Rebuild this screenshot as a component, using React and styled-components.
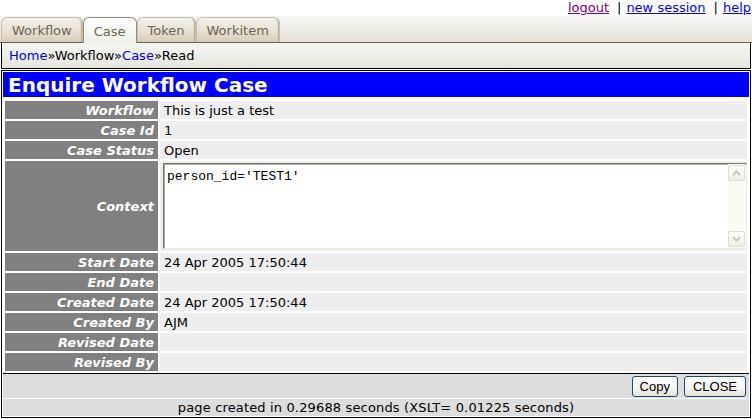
import React from 'react';
import styled, { createGlobalStyle } from 'styled-components';

const GlobalStyle = createGlobalStyle`
  body {
    margin: 0;
    background: #fff;
    font-family: 'DejaVu Sans', Verdana, sans-serif;
    font-size: 13px;
    color: #000;
  }
`;

const Page = styled.div`
  padding: 0 1px;
`;

const TopLinks = styled.div`
  height: 16px;
  line-height: 15px;
  text-align: right;
  padding-right: 0;
`;

const TopLink = styled.a`
  color: ${(p) => (p.visited ? '#800080' : '#0000ff')};
  text-decoration: underline;
  cursor: pointer;
`;

const Sep = styled.span`
  margin: 0 5px 0 8px;
`;

const TabBar = styled.div`
  display: flex;
  align-items: flex-end;
  height: 26px;
  padding-left: 1px;
  background: linear-gradient(#f6f6f2, #e4e2d9);
  border-bottom: 1px solid #6e6050;
  margin: 0 -1px;
`;

const Tab = styled.div`
  height: ${(p) => (p.active ? '26px' : '25px')};
  margin-bottom: ${(p) => (p.active ? '-1px' : '0')};
  padding: 0 10px;
  box-sizing: border-box;
  display: flex;
  align-items: center;
  justify-content: center;
  border: 1px solid ${(p) => (p.active ? '#948c77' : '#c6bfab')};
  border-bottom: none;
  border-radius: 6px 6px 0 0;
  background: ${(p) =>
    p.active
      ? 'linear-gradient(#ffffff, #f4f4ef 70%, #eeede6)'
      : 'linear-gradient(#f3f1e9, #e4dfd0 60%, #d5ceba)'};
  box-shadow: ${(p) => (p.active ? 'none' : 'inset -2px 0 1px -1px #b7af97')};
  color: #6b6553;
  font-size: 13px;
  padding-top: ${(p) => (p.active ? '2px' : '0')};
`;

const Crumbs = styled.div`
  height: 25px;
  display: flex;
  align-items: center;
  padding-left: 7px;
  border: 1px solid #000;
  border-top: none;
  background: linear-gradient(#f5f5f0, #eef0ea 45%, #e6e4db);
`;

const CrumbLink = styled.a`
  color: #0000ff;
  text-decoration: none;
`;

const Main = styled.div`
  margin-top: 1px;
  border: 1px solid #000;
  padding: 1px;
  background: #fff;
`;

const Title = styled.div`
  height: 25px;
  background: #0000ff;
  color: #fff;
  font-weight: bold;
  font-size: 20px;
  line-height: 26px;
  padding-left: 5px;
  white-space: nowrap;
`;

const Fields = styled.div`
  display: grid;
  grid-template-columns: 153px 1fr;
  gap: 2px;
  padding: 4px 2px 2px;
`;

const Label = styled.div`
  height: ${(p) => (p.tall ? '90px' : '18px')};
  background: #808080;
  color: #fff;
  font-weight: bold;
  font-style: italic;
  text-align: right;
  padding-right: 4px;
  display: flex;
  align-items: center;
  justify-content: flex-end;
`;

const Value = styled.div`
  height: 18px;
  background: #eeeeee;
  padding-left: 4px;
  display: flex;
  align-items: center;
  white-space: nowrap;
`;

const ContextValue = styled.div`
  height: 90px;
  background: #eeeeee;
  padding: 2px 0 2px 3px;
  box-sizing: border-box;
`;

const Field = styled.div`
  display: flex;
  height: 86px;
  box-sizing: border-box;
  border: 1px solid;
  border-color: #7a7467 #ece9d8 #ece9d8 #7a7467;
  box-shadow: inset 1px 1px 0 #aca695;
  background: #fff;
`;

const Area = styled.textarea`
  flex: 1;
  border: none;
  outline: none;
  resize: none;
  overflow: hidden;
  margin: 0;
  padding: 5px 0 0 3px;
  background: transparent;
  font-family: 'Liberation Mono', 'Courier New', monospace;
  font-size: 13px;
  line-height: 15px;
  color: #000;
`;

const Scroll = styled.div`
  width: 17px;
  display: flex;
  flex-direction: column;
  justify-content: space-between;
  background: #fbfbf4;
  padding: 1px 0;
  margin-right: 1px;
`;

const ScrollBtn = styled.div`
  height: 16px;
  box-sizing: border-box;
  border: 1px solid #dedcd0;
  border-radius: 2px;
  background: linear-gradient(#fdfdf9, #efeee6);
  display: flex;
  align-items: center;
  justify-content: center;
`;

const Chevron = ({ down }) => (
  <svg width="9" height="6" viewBox="0 0 9 6">
    <path
      d={down ? 'M1 1 L4.5 4.5 L8 1' : 'M1 5 L4.5 1.5 L8 5'}
      fill="none"
      stroke="#c9c8bd"
      strokeWidth="2"
    />
  </svg>
);

const ButtonBar = styled.div`
  border-top: 1px solid #000;
  background: #dddddd;
  height: 24px;
  display: flex;
  align-items: center;
  justify-content: flex-end;
  gap: 6px;
  padding-right: 3px;
`;

const Button = styled.button`
  height: 21px;
  padding: 0 ${(p) => (p.wide ? '8px' : '7px')};
  margin-top: 1px;
  border: 1px solid #1c4a7e;
  border-radius: 3px;
  background: linear-gradient(#ffffff, #f4f3ee 60%, #e3e1d6);
  font-family: 'Liberation Sans', Tahoma, sans-serif;
  font-size: 13px;
  color: #000;
  cursor: pointer;
`;

const Footer = styled.div`
  margin-top: 1px;
  height: 17px;
  line-height: 17px;
  background: #dddddd;
  text-align: center;
  white-space: nowrap;
  letter-spacing: 0.15px;
`;

const rows = [
  ['Workflow', 'This is just a test'],
  ['Case Id', '1'],
  ['Case Status', 'Open'],
  ['Context', null],
  ['Start Date', '24 Apr 2005 17:50:44'],
  ['End Date', ''],
  ['Created Date', '24 Apr 2005 17:50:44'],
  ['Created By', 'AJM'],
  ['Revised Date', ''],
  ['Revised By', ''],
];

export default function App() {
  return (
    <Page>
      <GlobalStyle />
      <TopLinks>
        <TopLink visited>logout</TopLink>
        <Sep>|</Sep>
        <TopLink>new session</TopLink>
        <Sep>|</Sep>
        <TopLink>help</TopLink>
      </TopLinks>
      <TabBar>
        <Tab>Workflow</Tab>
        <Tab active>Case</Tab>
        <Tab>Token</Tab>
        <Tab>Workitem</Tab>
      </TabBar>
      <Crumbs>
        <CrumbLink>Home</CrumbLink>»Workflow»<CrumbLink>Case</CrumbLink>»Read
      </Crumbs>
      <Main>
        <Title>Enquire Workflow Case</Title>
        <Fields>
          {rows.map(([label, value]) =>
            value === null ? (
              <React.Fragment key={label}>
                <Label tall>{label}</Label>
                <ContextValue>
                  <Field>
                    <Area readOnly value="person_id='TEST1'" />
                    <Scroll>
                      <ScrollBtn>
                        <Chevron />
                      </ScrollBtn>
                      <ScrollBtn>
                        <Chevron down />
                      </ScrollBtn>
                    </Scroll>
                  </Field>
                </ContextValue>
              </React.Fragment>
            ) : (
              <React.Fragment key={label}>
                <Label>{label}</Label>
                <Value>{value}</Value>
              </React.Fragment>
            )
          )}
        </Fields>
        <ButtonBar>
          <Button>Copy</Button>
          <Button wide>CLOSE</Button>
        </ButtonBar>
        <Footer>page created in 0.29688 seconds (XSLT= 0.01225 seconds)</Footer>
      </Main>
    </Page>
  );
}
